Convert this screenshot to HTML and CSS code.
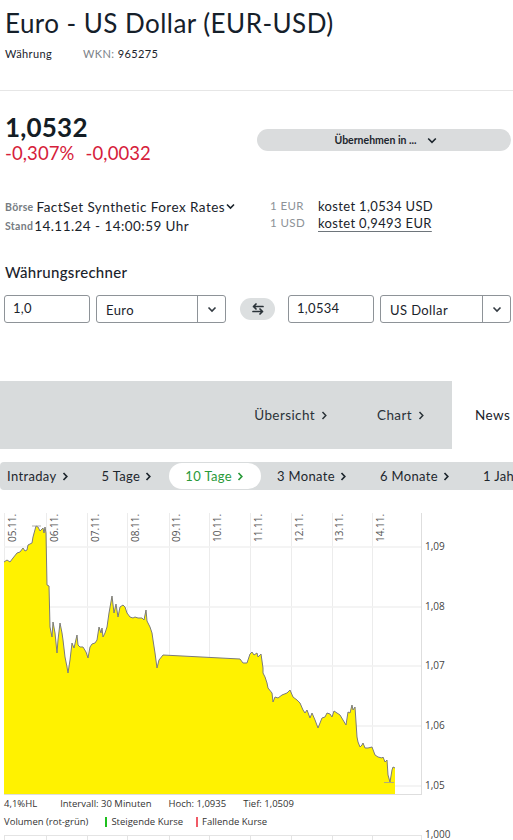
FILE: index.html
```html
<!DOCTYPE html>
<html lang="de">
<head>
<meta charset="utf-8">
<title>Euro - US Dollar (EUR-USD)</title>
<link rel="stylesheet" href="styles.css">
</head>
<body>
<header class="hdr">
  <h1 class="title">Euro - US Dollar (EUR-USD)</h1>
  <div class="meta"><span class="type">Währung</span><span class="wkn"><span class="lbl">WKN:</span> 965275</span></div>
</header>

<section class="quote">
  <div class="price">
    <div class="last">1,0532</div>
    <div class="chg"><span>-0,307%</span><span class="abs">-0,0032</span></div>
  </div>
  <button class="take">Übernehmen in ...<svg class="dn" width="10" height="7" viewBox="0 0 10 7"><path d="M1.2 1.5l3.8 3.8 3.8-3.8" fill="none" stroke="currentColor" stroke-width="1.6"/></svg></button>
</section>

<section class="info">
  <div class="info-l">
    <div class="irow"><span class="k">Börse</span><span class="v">FactSet Synthetic Forex Rates</span><svg class="dn2" width="9" height="7" viewBox="0 0 9 7"><path d="M1 1.5l3.5 3.5 3.5-3.5" fill="none" stroke="currentColor" stroke-width="1.6"/></svg></div>
    <div class="irow"><span class="k">Stand</span><span class="v tight">14.11.24 - 14:00:59 Uhr</span></div>
  </div>
  <div class="info-r">
    <div class="rrow"><span class="k2">1 EUR</span><span class="v">kostet 1,0534 USD</span></div>
    <div class="rrow"><span class="k2">1 USD</span><span class="v u">kostet 0,9493 EUR</span></div>
  </div>
</section>

<section class="calc">
  <h2 class="calc-title">Währungsrechner</h2>
  <div class="calc-row">
    <div class="inp">1,0</div>
    <div class="sel"><span class="sel-v">Euro</span><span class="sel-a"><svg width="10" height="7" viewBox="0 0 10 7"><path d="M1.5 1.5l3.5 3.5 3.5-3.5" fill="none" stroke="currentColor" stroke-width="1.6"/></svg></span></div>
    <div class="swap"><svg width="14" height="12" viewBox="0 0 14 12"><path d="M12 3.5H2.5M5 1L2.5 3.5 5 6M2 8.5h9.5M9 6l2.5 2.5L9 11" fill="none" stroke="#2a3238" stroke-width="1.7" stroke-linecap="round" stroke-linejoin="round"/></svg></div>
    <div class="inp">1,0534</div>
    <div class="sel sel2"><span class="sel-v">US Dollar</span><span class="sel-a"><svg width="10" height="7" viewBox="0 0 10 7"><path d="M1.5 1.5l3.5 3.5 3.5-3.5" fill="none" stroke="currentColor" stroke-width="1.6"/></svg></span></div>
  </div>
</section>

<nav class="tabs">
  <div class="tabs-grey">
    <span class="tab">Übersicht<svg class="chev" width="7" height="9" viewBox="0 0 7 9"><path d="M1.5 1l3.3 3.5L1.5 8" fill="none" stroke="currentColor" stroke-width="1.5"/></svg></span>
    <span class="tab">Chart<svg class="chev" width="7" height="9" viewBox="0 0 7 9"><path d="M1.5 1l3.3 3.5L1.5 8" fill="none" stroke="currentColor" stroke-width="1.5"/></svg></span>
  </div>
  <div class="tab-active">News</div>
</nav>

<nav class="periods">
  <span class="per first">Intraday<svg class="chev" width="7" height="9" viewBox="0 0 7 9"><path d="M1.5 1l3.3 3.5L1.5 8" fill="none" stroke="currentColor" stroke-width="1.7"/></svg></span>
  <span class="per">5 Tage<svg class="chev" width="7" height="9" viewBox="0 0 7 9"><path d="M1.5 1l3.3 3.5L1.5 8" fill="none" stroke="currentColor" stroke-width="1.7"/></svg></span>
  <span class="per on">10 Tage<svg class="chev" width="7" height="9" viewBox="0 0 7 9"><path d="M1.5 1l3.3 3.5L1.5 8" fill="none" stroke="currentColor" stroke-width="1.7"/></svg></span>
  <span class="per">3 Monate<svg class="chev" width="7" height="9" viewBox="0 0 7 9"><path d="M1.5 1l3.3 3.5L1.5 8" fill="none" stroke="currentColor" stroke-width="1.7"/></svg></span>
  <span class="per">6 Monate<svg class="chev" width="7" height="9" viewBox="0 0 7 9"><path d="M1.5 1l3.3 3.5L1.5 8" fill="none" stroke="currentColor" stroke-width="1.7"/></svg></span>
  <span class="per">1 Jahr<svg class="chev" width="7" height="9" viewBox="0 0 7 9"><path d="M1.5 1l3.3 3.5L1.5 8" fill="none" stroke="currentColor" stroke-width="1.7"/></svg></span>
</nav>

<svg class="chart" width="513" height="292" viewBox="0 505 513 292">
  <g stroke="#ececec" stroke-width="1">
    <path d="M4.5 513V794M46.5 513V794M87.5 513V794M127.5 513V794M169.5 513V794M209.5 513V794M250.5 513V794M291.5 513V794M332.5 513V794M372.5 513V794"/>
  </g>
  <g stroke="#f1f1f1" stroke-width="1.5">
    <path d="M4 547H421M4 607H421M4 666H421M4 726H421M4 786H421"/>
  </g>
  <path d="M4 794L4 562 7 560 10 562 13 558 17 553 20 552 23 548 25 551 27 550 28 545 32 543 33 537 36 526 38 527 40 531 43 528 44 533 45 527 46 533 47 585 49 586 50 627 52 637 53 622 55 633 57 653 58 640 60 623 62 633 63 640 65 657 67 667 68 673 70 660 72 643 74 648 77 635 78 645 80 647 83 647 86 652 88 658 90 647 92 644 95 643 97 640 99 627 101 633 102 628 103 637 105 633 107 627 109 613 112 596 114 613 116 604 118 617 120 607 123 605 125 607 127 613 130 617 133 618 135 617 138 618 142 618 144 620 146 610 147 621 150 627 152 633 153 640 155 653 157 668 159 660 163 655 240 659 243 663 247 663 250 654 252 652 254 655 257 653 258 657 261 654 263 668 263 673 265 677 267 683 268 688 272 693 273 702 275 697 278 698 282 695 287 693 290 690 293 697 297 700 300 703 303 710 305 713 307 710 310 718 312 713 315 720 318 728 322 718 325 717 327 713 330 714 332 717 334 711 337 713 340 715 343 720 346 725 348 712 350 713 352 705 353 710 355 707 357 737 358 742 360 747 362 745 363 743 365 748 368 748 372 747 375 755 378 757 382 758 383 757 385 762 387 760 388 775 390 782 392 770 393 767 395 768 395 794Z" fill="#fff200"/>
  <path d="M4 562L7 560 10 562 13 558 17 553 20 552 23 548 25 551 27 550 28 545 32 543 33 537 36 526 38 527 40 531 43 528 44 533 45 527 46 533 47 585 49 586 50 627 52 637 53 622 55 633 57 653 58 640 60 623 62 633 63 640 65 657 67 667 68 673 70 660 72 643 74 648 77 635 78 645 80 647 83 647 86 652 88 658 90 647 92 644 95 643 97 640 99 627 101 633 102 628 103 637 105 633 107 627 109 613 112 596 114 613 116 604 118 617 120 607 123 605 125 607 127 613 130 617 133 618 135 617 138 618 142 618 144 620 146 610 147 621 150 627 152 633 153 640 155 653 157 668 159 660 163 655 240 659 243 663 247 663 250 654 252 652 254 655 257 653 258 657 261 654 263 668 263 673 265 677 267 683 268 688 272 693 273 702 275 697 278 698 282 695 287 693 290 690 293 697 297 700 300 703 303 710 305 713 307 710 310 718 312 713 315 720 318 728 322 718 325 717 327 713 330 714 332 717 334 711 337 713 340 715 343 720 346 725 348 712 350 713 352 705 353 710 355 707 357 737 358 742 360 747 362 745 363 743 365 748 368 748 372 747 375 755 378 757 382 758 383 757 385 762 387 760 388 775 390 782 392 770 393 767 395 768" fill="none" stroke="#7b7b7b" stroke-width="1" stroke-linejoin="round"/>
  <path d="M32 526H41M384 782.5H394" stroke="#9a9a9a" stroke-width="0.8"/>
  <path d="M421.5 513V795M4 794.5H421" stroke="#dedede" stroke-width="1"/>
  <g class="xl">
    <text x="15.5" y="542" transform="rotate(-90 15.5 542)">05.11.</text>
    <text x="57.5" y="542" transform="rotate(-90 57.5 542)">06.11.</text>
    <text x="98.5" y="542" transform="rotate(-90 98.5 542)">07.11.</text>
    <text x="138.5" y="542" transform="rotate(-90 138.5 542)">08.11.</text>
    <text x="180" y="542" transform="rotate(-90 180 542)">09.11.</text>
    <text x="220.5" y="542" transform="rotate(-90 220.5 542)">10.11.</text>
    <text x="261.5" y="542" transform="rotate(-90 261.5 542)">11.11.</text>
    <text x="302.5" y="542" transform="rotate(-90 302.5 542)">12.11.</text>
    <text x="343" y="542" transform="rotate(-90 343 542)">13.11.</text>
    <text x="384" y="542" transform="rotate(-90 384 542)">14.11.</text>
  </g>
  <g class="yl">
    <text x="425" y="550">1,09</text>
    <text x="425" y="610">1,08</text>
    <text x="425" y="669">1,07</text>
    <text x="425" y="729">1,06</text>
    <text x="425" y="789">1,05</text>
  </g>
</svg>

<div class="stats">
  <span class="st">4,1%HL</span>
  <span class="st s2">Intervall: 30 Minuten</span>
  <span class="st s3">Hoch: 1,0935</span>
  <span class="st s3">Tief: 1,0509</span>
</div>
<div class="legend">
  <span class="lg">Volumen (rot-grün)</span>
  <span class="lg up"><i class="bar g"></i>Steigende Kurse</span>
  <span class="lg dn3"><i class="bar r"></i>Fallende Kurse</span>
</div>
<svg class="vol" width="513" height="12" viewBox="0 828 513 12">
  <path d="M4 833.5H421" stroke="#e4e4e4" stroke-width="1"/>
  <path d="M4.5 833V840M46.5 833V840M87.5 833V840M127.5 833V840M169.5 833V840M209.5 833V840M250.5 833V840M291.5 833V840M332.5 833V840M372.5 833V840M421.5 833V840" stroke="#e4e4e4" stroke-width="1"/>
  <text class="ylt" x="425" y="836">1,000</text>
</svg>
</body>
</html>
```
FILE: styles.css
```css
* { box-sizing: border-box; }
html, body { margin: 0; padding: 0; }
body {
  width: 513px;
  overflow-x: hidden;
  font-family: Lato, "Open Sans", sans-serif;
  color: #1a232b;
  background: #fff;
}

.hdr {
  height: 91px;
  border-bottom: 1px solid #e6e6e6;
  padding: 7px 5px 0;
}
.title {
  margin: 0;
  font-size: 26px;
  font-weight: 400;
  line-height: 32px;
  letter-spacing: 0.45px;
  color: #15202a;
  white-space: nowrap;
}
.meta {
  margin-top: 8px;
  font-size: 11px;
  line-height: 14px;
  letter-spacing: 0.4px;
  display: flex;
}
.type { width: 78px; }
.wkn .lbl { color: #7c8288; }

.quote {
  display: flex;
  padding: 21px 0 0 5px;
}
.price { flex: 0 0 auto; }
.last {
  font-size: 26px;
  font-weight: 700;
  line-height: 30px;
  letter-spacing: 0.2px;
  color: #141d25;
}
.chg {
  font-size: 18.5px;
  line-height: 22px;
  color: #d6203a;
  letter-spacing: 0.1px;
}
.chg .abs { margin-left: 11px; }
.take {
  margin: 17px 2px 0 auto;
  width: 254px;
  height: 22px;
  border: 0;
  border-radius: 11px;
  background: #dadcdd;
  font-family: inherit;
  font-size: 10.5px;
  font-weight: 700;
  letter-spacing: 0;
  color: #1c252c;
  display: flex;
  align-items: center;
  justify-content: center;
  gap: 10px;
  padding: 0 0 0 3px;
}

.info {
  display: flex;
  padding: 33px 0 0 5px;
}
.info-l { width: 265px; }
.irow {
  display: flex;
  align-items: center;
  height: 19px;
  white-space: nowrap;
}
.k {
  font-size: 10.5px;
  font-weight: 700;
  color: #767c82;
  margin-right: 3px;
  letter-spacing: 0.3px;
}
.irow .v {
  font-size: 13.5px;
  letter-spacing: 0.45px;
}
.irow .tight { margin-left: -2px; }
.dn2 { margin-left: 1px; color: #1a232b; }
.rrow {
  display: flex;
  align-items: center;
  height: 17px;
  white-space: nowrap;
}
.k2 {
  width: 48px;
  font-size: 11.5px;
  color: #8d9297;
  letter-spacing: 0.4px;
}
.rrow .v {
  font-size: 13px;
  letter-spacing: 0.35px;
}
.rrow .u {
  text-decoration: underline;
  text-decoration-color: #6e757b;
  text-underline-offset: 3px;
}

.calc { padding: 27px 0 0 0; }
.calc-title {
  margin: 0 0 0 5px;
  font-size: 15px;
  font-weight: 500;
  line-height: 20px;
  letter-spacing: 0.3px;
}
.calc-row {
  display: flex;
  align-items: center;
  margin-top: 13px;
  padding-left: 4px;
  height: 28px;
}
.inp {
  width: 86px;
  height: 28px;
  border: 1px solid #8e9398;
  border-radius: 3px;
  font-size: 13px;
  line-height: 24px;
  padding-left: 8px;
  letter-spacing: 0.3px;
}
.sel {
  width: 130px;
  height: 28px;
  border: 1px solid #8e9398;
  border-radius: 3px;
  display: flex;
  margin-left: 6px;
  font-size: 13px;
  letter-spacing: 0.4px;
}
.sel2 { width: 131px; }
.sel-v {
  flex: 1;
  padding-left: 9px;
  line-height: 28px;
}
.sel-a {
  width: 28px;
  border-left: 1px solid #8e9398;
  display: flex;
  align-items: center;
  justify-content: center;
  color: #333b42;
}
.swap {
  width: 35px;
  height: 22px;
  margin: 0 13px 0 14px;
  border-radius: 11px;
  background: #dcdfe0;
  display: flex;
  align-items: center;
  justify-content: center;
}

.tabs {
  display: flex;
  margin-top: 58px;
  height: 68px;
}
.tabs-grey {
  width: 452px;
  background: #d8dbdc;
  display: flex;
  justify-content: flex-end;
  align-items: center;
  padding-right: 27px;
  gap: 49px;
}
.tab, .tab-active {
  font-size: 13.5px;
  letter-spacing: 0.4px;
  display: flex;
  align-items: center;
  color: #2a3238;
  white-space: nowrap;
}
.tab .chev { margin-left: 6px; }
.tab-active {
  padding-left: 23px;
  color: #1a232b;
}

.periods {
  margin-top: 13px;
  height: 28px;
  background: #d9dcdd;
  display: flex;
  align-items: center;
  overflow: hidden;
  white-space: nowrap;
  border-radius: 4px 0 0 4px;
}
.per {
  flex: 0 0 auto;
  height: 26px;
  display: flex;
  align-items: center;
  padding: 0 17px 0 16px;
  font-size: 13px;
  letter-spacing: 0.35px;
  color: #1e272e;
  border-radius: 13px;
}
.per .chev { margin-left: 5px; }
.per.first { padding-left: 7px; padding-right: 17px; }
.per.on {
  background: #fff;
  color: #2a9a3a;
}

.chart {
  display: block;
  margin-top: 15px;
}
.xl text {
  font-family: "Open Sans", sans-serif;
  font-size: 10px;
  fill: #555;
}
.yl text, .ylt {
  font-family: "Open Sans", sans-serif;
  font-size: 10px;
  fill: #444;
}

.stats, .legend {
  display: flex;
  font-family: "Open Sans", sans-serif;
  font-size: 9.5px;
  color: #333;
  white-space: nowrap;
  padding-left: 4px;
}
.stats { height: 13px; line-height: 13px; margin-top: 0; }
.s2 { margin-left: 23px; }
.s3 { margin-left: 17px; }
.legend { height: 16px; line-height: 16px; margin-top: 4px; align-items: center; }
.lg { display: flex; align-items: center; }
.up { margin-left: 17px; }
.dn3 { margin-left: 13px; }
.bar {
  display: inline-block;
  width: 2px;
  height: 10px;
  margin-right: 4px;
}
.bar.g { background: #1fc01f; }
.bar.r { background: #f05a66; }
.vol { display: block; }
```
